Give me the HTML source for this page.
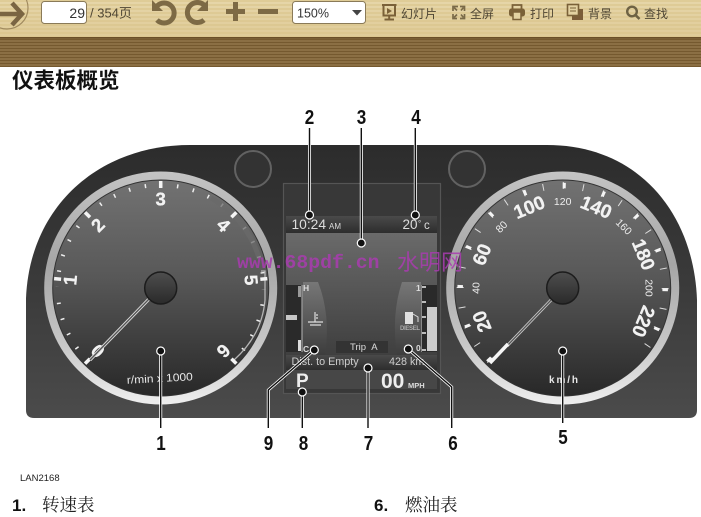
<!DOCTYPE html>
<html><head><meta charset="utf-8">
<style>
html,body{margin:0;padding:0;background:#fff;width:701px;height:517px;overflow:hidden}
svg{position:absolute;left:0;top:0}
.t{font-family:"Liberation Sans","Noto Sans CJK SC",sans-serif}
.w{font-family:"Liberation Sans",sans-serif;font-weight:bold;fill:#f2f2f2;text-anchor:middle;stroke:#f2f2f2;stroke-width:.3}
.m{font-family:"Liberation Sans",sans-serif;fill:#eee;text-anchor:middle}
.n{font-family:"Liberation Sans",sans-serif;font-weight:bold;fill:#111;text-anchor:middle;font-size:20px}
.lb{font-family:"Noto Sans CJK SC","Liberation Sans",sans-serif;font-size:12px;fill:#4f4634}
</style></head><body>
<svg width="701" height="517" viewBox="0 0 701 517" xmlns="http://www.w3.org/2000/svg">
<defs>
<linearGradient id="tb" x1="0" y1="0" x2="0" y2="1"><stop offset="0" stop-color="#e6d6a9"/><stop offset="1" stop-color="#dfcb98"/></linearGradient>
<pattern id="st1" width="4" height="4" patternUnits="userSpaceOnUse"><rect width="4" height="2" fill="#d9c389" opacity=".55"/></pattern>
<pattern id="st2" width="3" height="3" patternUnits="userSpaceOnUse"><rect width="3" height="3" fill="#8b6f44"/><rect width="3" height="1" fill="#75592f"/></pattern>
<linearGradient id="dash" x1="0" y1="0" x2="0" y2="1"><stop offset="0" stop-color="#2c2c2c"/><stop offset=".5" stop-color="#3a3a3a"/><stop offset="1" stop-color="#4b4b4b"/></linearGradient>
<linearGradient id="dial" x1="0" y1="0" x2="0" y2="1"><stop offset="0" stop-color="#727272"/><stop offset=".45" stop-color="#585858"/><stop offset="1" stop-color="#282828"/></linearGradient>
<linearGradient id="bez" x1="0" y1="0" x2="0" y2="1"><stop offset="0" stop-color="#c4c4c4"/><stop offset=".4" stop-color="#a6a6a6"/><stop offset=".75" stop-color="#c8c8c8"/><stop offset="1" stop-color="#eeeeee"/></linearGradient>
<linearGradient id="hub" x1="0" y1="0" x2="0" y2="1"><stop offset="0" stop-color="#4e4e4e"/><stop offset="1" stop-color="#2a2a2a"/></linearGradient>
<linearGradient id="mid" x1="0" y1="0" x2="0" y2="1"><stop offset="0" stop-color="#6a6a6a"/><stop offset="1" stop-color="#3f3f3f"/></linearGradient>
<linearGradient id="bar" x1="0" y1="0" x2="0" y2="1"><stop offset="0" stop-color="#4a4a4a"/><stop offset="1" stop-color="#2d2d2d"/></linearGradient>
<linearGradient id="side" x1="0" y1="0" x2="0" y2="1"><stop offset="0" stop-color="#777"/><stop offset="1" stop-color="#3d3d3d"/></linearGradient>
</defs>

<!-- toolbar -->
<rect width="701" height="37" fill="url(#tb)"/><rect width="701" height="37" fill="url(#st1)"/>
<rect y="37" width="701" height="30" fill="url(#st2)"/><rect y="37" width="701" height="1.5" fill="#6a4f28"/>
<circle cx="7" cy="8" r="21" fill="none" stroke="#a08a5e" stroke-width="1.2"/>
<path d="M0 14H21M12 3L22 14L12 25" fill="none" stroke="#7a6543" stroke-width="4.5"/>
<rect x="41.500" y="1.500" width="45" height="22" rx="3" fill="#fff" stroke="#8a7a58"/>
<text x="85" y="18" text-anchor="end" class="t" font-size="14" fill="#333">29</text>
<text x="90" y="17.500" class="t" font-size="13" fill="#4f4634">/ 354页</text>
<g fill="none" stroke="#7d6a45" stroke-width="5">
<path d="M157 6A10 10 0 1 1 157 20"/><path d="M205 6A10 10 0 1 0 204 20"/></g>
<path d="M152 0L152 11L163 11Z" fill="#7d6a45"/><path d="M208 0L208 11L197 11Z" fill="#7d6a45"/>
<path d="M226 11.500H245M235.500 2V21" stroke="#7d6a45" stroke-width="5" fill="none"/>
<path d="M258 11.500H278" stroke="#7d6a45" stroke-width="5" fill="none"/>
<rect x="292.500" y="1.500" width="73" height="22" rx="3" fill="#fff" stroke="#8a7a58"/>
<text x="297" y="17.500" class="t" font-size="12.500" fill="#333">150%</text>
<path d="M352 10H362L357 15.500Z" fill="#444"/>
<!-- projector -->
<path d="M382 5H396.500M383.500 5V15.500H395V5M389.200 15.500V19M384.500 19.500H394" fill="none" stroke="#7a6138" stroke-width="2"/><path d="M387 8V14L392 11Z" fill="#7a6138"/>
<text x="401" y="18" class="lb">幻灯片</text>
<!-- fullscreen -->
<g fill="none" stroke="#7a6a48" stroke-width="1.700"><path d="M453 11V6.500H458M464.500 11V6.500H460M453 14V18.500H457M464.500 14V18.500H460"/><path d="M454 7.500L457 10.500M463.500 7.500L461 10.500M454 17.500L457 14.500M463.500 17.500L461 14.500"/></g>
<text x="470" y="18" class="lb">全屏</text>
<!-- printer -->
<path d="M512.500 9V5H521.500V9" fill="none" stroke="#7a6138" stroke-width="1.800"/><rect x="509" y="8.500" width="16" height="8" rx="2.500" fill="#7a6138"/><rect x="513" y="12" width="8" height="7.500" fill="#e3d2a2" stroke="#7a6138" stroke-width="1.500"/>
<text x="530" y="18" class="lb">打印</text>
<!-- background -->
<path d="M572 9H583V20H572Z" fill="#7a5c38"/><rect x="567.500" y="4.500" width="11" height="11" fill="#e3d2a2" stroke="#7a6138" stroke-width="1.600"/><path d="M570 8H576M570 11H576" stroke="#7a6138"/>
<text x="588" y="18" class="lb">背景</text>
<!-- search -->
<circle cx="632" cy="11.500" r="4.800" fill="none" stroke="#6e6244" stroke-width="2.400"/><path d="M635.500 15L639.500 19" stroke="#6e6244" stroke-width="2.600"/>
<text x="644" y="18" class="lb">查找</text>

<text x="12" y="88" class="t" font-size="21.500" font-weight="bold" fill="#111">仪表板概览</text>

<!-- dashboard -->
<path d="M26 410V298C30 205 100 145 190 145H547C640 145 694 215 697 300V410Q697 418 689 418H34Q26 418 26 410Z" fill="url(#dash)"/>
<circle cx="253" cy="169" r="18" fill="#333" stroke="#626262" stroke-width="2"/>
<circle cx="467" cy="169" r="18" fill="#333" stroke="#626262" stroke-width="2"/>

<!-- left gauge -->
<circle cx="160.700" cy="288" r="116.500" fill="url(#bez)"/>
<circle cx="160.700" cy="288" r="108" fill="url(#dial)" stroke="#333" stroke-width="1"/>
<path d="M87.870 360.830A103 103 0 1 1 233.530 360.830" fill="none" stroke="#eee" stroke-width="4" stroke-dasharray="1.500 14.680"/>
<path d="M55 288H61M260 288H267" stroke="#525252" stroke-width="3"/>
<path d="M211 198A103 103 0 0 1 259 258" fill="none" stroke="#6a6a6a" stroke-width="5" opacity=".75"/>
<path d="M261 271H265V300Q262 335 234 360" fill="none" stroke="#b5b5b5" stroke-width="1.300"/>
<g stroke="#f4f4f4" stroke-width="3.500">
<line x1="160.700" y1="181" x2="160.700" y2="188"/>
<line x1="160.700" y1="181" x2="160.700" y2="188" transform="rotate(-45 160.700 288)"/>
<line x1="160.700" y1="181" x2="160.700" y2="188" transform="rotate(-85 160.700 288)"/>
<line x1="160.700" y1="181" x2="160.700" y2="188" transform="rotate(-135 160.700 288)"/>
<line x1="160.700" y1="181" x2="160.700" y2="188" transform="rotate(45 160.700 288)"/>
<line x1="160.700" y1="181" x2="160.700" y2="188" transform="rotate(85 160.700 288)"/>
<line x1="160.700" y1="181" x2="160.700" y2="188" transform="rotate(135 160.700 288)"/>
</g>
<g font-size="18.500">
<text class="w" x="160.700" y="205.500">3</text>
<text class="w" x="160.700" y="205.500" transform="rotate(-45 160.700 288)">2</text>
<text class="w" x="160.700" y="203.500" transform="rotate(-85 160.700 288)">1</text>
<text class="w" x="160.700" y="205.500" transform="rotate(-135 160.700 288)">0</text>
<text class="w" x="160.700" y="205.500" transform="rotate(45 160.700 288)">4</text>
<text class="w" x="160.700" y="203.500" transform="rotate(85 160.700 288)">5</text>
<text class="w" x="160.700" y="205.500" transform="rotate(135 160.700 288)">6</text>
</g>
<path d="M149 299L90 360" stroke="#ddd" stroke-width="3.200"/><path d="M149 299L90 360" stroke="#555" stroke-width="1.400"/>
<circle cx="160.700" cy="288" r="16" fill="url(#hub)" stroke="#1c1c1c" stroke-width="1.500"/>
<text x="160" y="382" class="t" font-size="11" fill="#e8e8e8" text-anchor="middle" textLength="66" lengthAdjust="spacingAndGlyphs" transform="rotate(-3 160 382)">r/min x 1000</text>

<!-- right gauge -->
<circle cx="562.700" cy="288" r="116.500" fill="url(#bez)"/>
<circle cx="562.700" cy="288" r="108" fill="url(#dial)" stroke="#333" stroke-width="1"/>
<path d="M490.200 360.500A102.500 102.500 0 1 1 641.200 353.900" fill="none" stroke="#ddd" stroke-width="7" stroke-dasharray="1 19.126"/>
<path d="M490.200 360.500A102.500 102.500 0 1 1 641.200 353.900" fill="none" stroke="#f4f4f4" stroke-width="5.500" stroke-dasharray="3 37.252"/>
<g font-size="19">
<text class="w" x="562.700" y="207" transform="rotate(-112.500 562.700 288)">20</text>
<text class="w" x="562.700" y="207" transform="rotate(-67.500 562.700 288)">60</text>
<text class="w" x="562.700" y="207" transform="rotate(-22.500 562.700 288)">100</text>
<text class="w" x="562.700" y="207" transform="rotate(22.500 562.700 288)">140</text>
<text class="w" x="562.700" y="207" transform="rotate(67.500 562.700 288)">180</text>
<text class="w" x="562.700" y="207" transform="rotate(112.500 562.700 288)">220</text>
</g>
<g font-size="10.500">
<text class="m" x="562.700" y="205" transform="rotate(-90 562.700 288)">40</text>
<text class="m" x="562.700" y="205" transform="rotate(-45 562.700 288)">80</text>
<text class="m" x="562.700" y="205">120</text>
<text class="m" x="562.700" y="205" transform="rotate(45 562.700 288)">160</text>
<text class="m" x="562.700" y="205" transform="rotate(90 562.700 288)">200</text>
</g>
<path d="M552 299L507 346" stroke="#ccc" stroke-width="3"/><path d="M552 299L507 346" stroke="#555" stroke-width="1.300"/>
<path d="M508 344L490 363" stroke="#f6f6f6" stroke-width="3.500"/>
<circle cx="562.700" cy="288" r="16" fill="url(#hub)" stroke="#1c1c1c" stroke-width="1.500"/>
<text x="563.500" y="383" class="t" font-size="10" font-weight="bold" fill="#e8e8e8" text-anchor="middle" textLength="29">km/h</text>

<!-- centre panel -->
<rect x="283.500" y="183.500" width="157" height="210" fill="#383838" stroke="#555" stroke-width="1.200"/>
<rect x="286" y="216" width="151" height="17" fill="url(#bar)"/>
<rect x="286" y="233" width="151" height="122" fill="url(#mid)"/>
<rect x="286" y="355" width="151" height="15" fill="url(#bar)"/>
<rect x="286" y="370" width="151" height="19" fill="#474747"/>
<text x="291.500" y="229" class="t" font-size="13.800" fill="#ddd">10:24</text><text x="329" y="229" class="t" font-size="8" fill="#ddd">AM</text>
<text x="402.500" y="229" class="t" font-size="13.500" fill="#ddd">20</text><text x="418" y="226" class="t" font-size="8" fill="#ddd">°</text><text x="424" y="229" class="t" font-size="11.500" fill="#ddd">c</text>
<!-- temp -->
<rect x="286" y="285" width="16" height="67" fill="#2a2a2a"/>
<path d="M302 285V352" stroke="#bbb" stroke-width="1"/>
<path d="M303 282H318Q331 315 325 355H303Z" fill="url(#side)"/>
<rect x="286" y="315" width="11" height="5" fill="#c6c6c6"/>
<rect x="298" y="286" width="3" height="11" fill="#999"/><rect x="298" y="340" width="3" height="11" fill="#ddd"/>
<text x="303" y="291" class="t" font-size="8.500" font-weight="bold" fill="#ddd">H</text>
<text x="303" y="352" class="t" font-size="8.500" font-weight="bold" fill="#ddd">C</text>
<path d="M315 312V322M318 315H316M318 318H316M308 322H323M310 325H321" stroke="#ddd" stroke-width="1.200" fill="none"/>
<!-- fuel -->
<rect x="422" y="285" width="15" height="67" fill="#2a2a2a"/>
<path d="M421.500 285V352" stroke="#888" stroke-width="1"/>
<path d="M421 282H402Q391 315 397 355H421Z" fill="url(#side)"/>
<rect x="427" y="307" width="10" height="44" fill="#ccc"/>
<path d="M422 287H426M422 302H426M422 317H426M422 333H426M422 350H426" stroke="#eee" stroke-width="1.500"/>
<text x="416" y="291" class="t" font-size="8.500" font-weight="bold" fill="#ddd">1</text>
<text x="416" y="351" class="t" font-size="8.500" font-weight="bold" fill="#ddd">0</text>
<rect x="405" y="312" width="8" height="12" fill="#e0e0e0"/><path d="M413 314L418 317V322" stroke="#ddd" fill="none"/>
<text x="400" y="330" class="t" font-size="6" font-weight="bold" fill="#aaa" textLength="20">DIESEL</text>
<rect x="336" y="341" width="52" height="12" fill="#333"/>
<text x="350" y="350" class="t" font-size="9.500" fill="#ddd">Trip  &#160;A</text>
<text x="291.500" y="365" class="t" font-size="10.800" fill="#ccc">Dist. to Empty</text>
<text x="389" y="365" class="t" font-size="10.800" fill="#ccc">428 km</text>
<text x="296" y="387" class="t" font-size="19" font-weight="bold" fill="#eee">P</text>
<text x="381" y="388" class="t" font-size="21" font-weight="bold" fill="#eee">00</text>
<text x="408" y="388" class="t" font-size="7.500" font-weight="bold" fill="#ddd">MPH</text>

<!-- watermark -->
<g fill="#a93cb0" opacity=".85" font-weight="bold">
<text x="237" y="268" font-family="'Liberation Mono',monospace" font-size="19.800">www.68pdf.cn</text>
<text x="397" y="270" font-family="'Noto Sans CJK SC',sans-serif" font-size="22" font-weight="normal">水明网</text>
</g>

<!-- callouts -->
<g fill="none" stroke="#fff" stroke-width="3">
<path d="M309.500 128V215M361.300 128V243M415.300 128V215M160.700 351V428M562.700 351V423M314.300 350L268.300 390V428M302.300 392V428M368 368V428M408.300 349L451.700 387V428"/></g>
<g fill="none" stroke="#111" stroke-width="1.400">
<path d="M309.500 128V215M361.300 128V243M415.300 128V215M160.700 351V428M562.700 351V423M314.300 350L268.300 390V428M302.300 392V428M368 368V428M408.300 349L451.700 387V428"/></g>
<g fill="#111" stroke="#fff" stroke-width="1.200">
<circle cx="309.500" cy="215" r="4"/><circle cx="361.300" cy="243" r="4"/><circle cx="415.300" cy="215" r="4"/>
<circle cx="160.700" cy="351" r="4"/><circle cx="562.700" cy="351" r="4"/><circle cx="314.300" cy="350" r="4"/>
<circle cx="302.300" cy="392" r="4"/><circle cx="368" cy="368" r="4"/><circle cx="408.300" cy="349" r="4"/></g>
<text class="n" x="309.500" y="124" textLength="9.500" lengthAdjust="spacingAndGlyphs">2</text><text class="n" x="361.500" y="124" textLength="9.500" lengthAdjust="spacingAndGlyphs">3</text><text class="n" x="416" y="124" textLength="9.500" lengthAdjust="spacingAndGlyphs">4</text>
<text class="n" x="161" y="450" textLength="9.500" lengthAdjust="spacingAndGlyphs">1</text><text class="n" x="268.500" y="450" textLength="9.500" lengthAdjust="spacingAndGlyphs">9</text><text class="n" x="303.500" y="450" textLength="9.500" lengthAdjust="spacingAndGlyphs">8</text>
<text class="n" x="368.500" y="450" textLength="9.500" lengthAdjust="spacingAndGlyphs">7</text><text class="n" x="453" y="450" textLength="9.500" lengthAdjust="spacingAndGlyphs">6</text><text class="n" x="563" y="444" textLength="9.500" lengthAdjust="spacingAndGlyphs">5</text>

<text x="20" y="481" class="t" font-size="9.500" fill="#222">LAN2168</text>
<text x="12" y="511" class="t" font-size="17" font-weight="bold" fill="#111">1.</text>
<text x="42" y="511" font-family="'Noto Serif CJK SC',serif" font-size="17.500" fill="#222">转速表</text>
<text x="374" y="511" class="t" font-size="17" font-weight="bold" fill="#111">6.</text>
<text x="405" y="511" font-family="'Noto Serif CJK SC',serif" font-size="17.500" fill="#222">燃油表</text>
</svg>
</body></html>
